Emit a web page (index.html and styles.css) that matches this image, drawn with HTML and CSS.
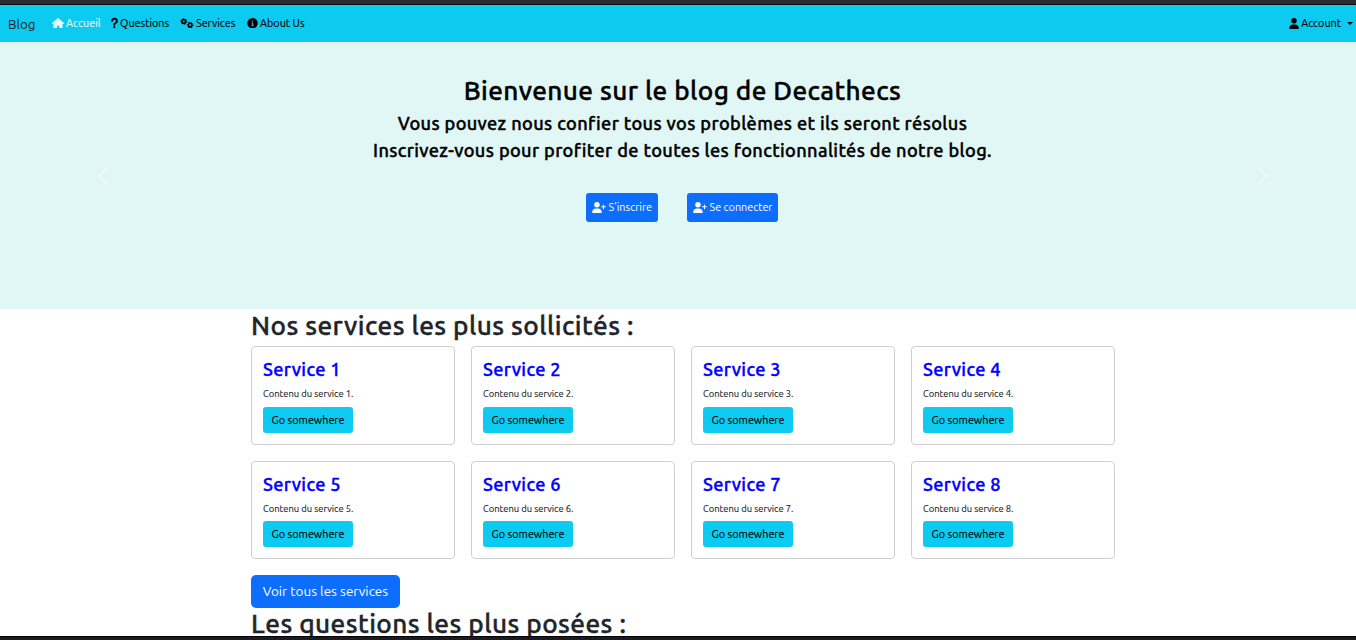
FILE: index.html
```html
<!DOCTYPE html>
<html lang="fr">
<head>
<meta charset="utf-8">
<title>Blog</title>
<link rel="stylesheet" href="styles.css">
</head>
<body>
<svg class="defs" aria-hidden="true">
  <symbol id="home" viewBox="0 0 576 512"><path d="M575.8 255.500c0 18-15 32.100-32 32.100h-32l.7 160.200c0 35-25 64.200-56 64.200H368c-18 0-32-14-32-32v-88c0-18-14-32-32-32h-32c-18 0-32 14-32 32v88c0 18-14 32-32 32h-88c-31 0-56-29-56-64V287.600H32c-18 0-32-14-32-32.100 0-9 3-17 10-24L266.400 8c7-7 15-8 22-8s15 2 21 7l255.400 224.500c8 7 12 15 11 24z"/></symbol>
  <symbol id="question" viewBox="0 0 320 512"><path stroke="currentColor" stroke-width="24" d="M80 160c0-35 29-64 64-64h32c35 0 64 29 64 64v4c0 22-11 42-30 54l-44 28c-30 19-48 52-48 88v2c0 18 14 32 32 32s32-14 32-32v-1c0-14 7-27 19-34l44-29c37-23 59-64 59-108v-4c0-71-57-128-128-128h-32C73 32 16 89 16 160c0 18 14 32 32 32s32-14 32-32zm70 320a40 40 0 1 0 0-80 40 40 0 1 0 0 80z"/></symbol>
  <symbol id="gears" viewBox="0 0 640 512"><g fill="none" stroke="currentColor"><circle cx="165" cy="165" r="88" stroke-width="80"/><circle cx="165" cy="165" r="143" stroke-width="48" stroke-dasharray="75 74.750"/><circle cx="475" cy="345" r="88" stroke-width="80"/><circle cx="475" cy="345" r="143" stroke-width="48" stroke-dasharray="75 74.750" stroke-dashoffset="35"/></g></symbol>
  <symbol id="info" viewBox="0 0 512 512"><path fill-rule="evenodd" d="M256 512a256 256 0 1 0 0-512 256 256 0 1 0 0 512zm-40-176h24v-64h-24a24 24 0 0 1 0-48h48c13 0 24 11 24 24v88h8a24 24 0 0 1 0 48h-80a24 24 0 0 1 0-48zm40-208a32 32 0 1 1 0 64 32 32 0 1 1 0-64z"/></symbol>
  <symbol id="user" viewBox="0 0 448 512"><path d="M224 256a128 128 0 1 0 0-256 128 128 0 1 0 0 256zm-46 48C80 304 0 384 0 482c0 16 13 30 30 30h388c17 0 30-14 30-30 0-98-80-178-178-178z"/></symbol>
  <symbol id="user-plus" viewBox="0 0 640 512"><path d="M224 256a128 128 0 1 0 0-256 128 128 0 1 0 0 256zm-46 48C80 304 0 384 0 482c0 16 13 30 30 30h388c17 0 30-14 30-30 0-98-80-178-178-178zM504 312v-64h-64a24 24 0 0 1 0-48h64v-64a24 24 0 0 1 48 0v64h64a24 24 0 0 1 0 48h-64v64a24 24 0 0 1-48 0z"/></symbol>
</svg>
<div class="window-top"></div>
<nav class="navbar">
  <a class="brand">Blog</a>
  <a class="link home active"><svg class="icon"><use href="#home"/></svg><span>Accueil</span></a>
  <a class="link questions"><svg class="icon"><use href="#question"/></svg><span>Questions</span></a>
  <a class="link services-link"><svg class="icon"><use href="#gears"/></svg><span>Services</span></a>
  <a class="link about"><svg class="icon"><use href="#info"/></svg><span>About Us</span></a>
  <a class="link account"><svg class="icon"><use href="#user"/></svg><span>Account</span><i class="caret"></i></a>
</nav>
<header class="hero">
  <svg class="arrow" viewBox="0 0 16 16"><path d="M11.350 1.650 5 8l6.350 6.350"/></svg>
  <div class="hero-content">
    <h1>Bienvenue sur le blog de Decathecs</h1>
    <h2 class="lead">Vous pouvez nous confier tous vos problèmes et ils seront résolus</h2>
    <h2 class="sublead">Inscrivez-vous pour profiter de toutes les fonctionnalités de notre blog.</h2>
    <div class="actions">
      <a class="button signup"><svg class="icon"><use href="#user-plus"/></svg><span>S'inscrire</span></a>
      <a class="button login"><svg class="icon"><use href="#user-plus"/></svg><span>Se connecter</span></a>
    </div>
  </div>
  <svg class="arrow" viewBox="0 0 16 16"><path d="M4.650 1.650 11 8l-6.350 6.350"/></svg>
</header>
<main class="container">
  <h2 class="section-title"><span>Nos services les plus sollicités :</span></h2>
  <div class="cards">
    <article class="card"><h3>Service 1</h3><p>Contenu du service 1.</p><a class="go">Go somewhere</a></article>
    <article class="card"><h3>Service 2</h3><p>Contenu du service 2.</p><a class="go">Go somewhere</a></article>
    <article class="card"><h3>Service 3</h3><p>Contenu du service 3.</p><a class="go">Go somewhere</a></article>
    <article class="card"><h3>Service 4</h3><p>Contenu du service 4.</p><a class="go">Go somewhere</a></article>
    <article class="card"><h3>Service 5</h3><p>Contenu du service 5.</p><a class="go">Go somewhere</a></article>
    <article class="card"><h3>Service 6</h3><p>Contenu du service 6.</p><a class="go">Go somewhere</a></article>
    <article class="card"><h3>Service 7</h3><p>Contenu du service 7.</p><a class="go">Go somewhere</a></article>
    <article class="card"><h3>Service 8</h3><p>Contenu du service 8.</p><a class="go">Go somewhere</a></article>
  </div>
  <a class="all">Voir tous les services</a>
  <h2 class="section-title posed"><span>Les questions les plus posées :</span></h2>
</main>
<footer class="window-bottom"></footer>
</body>
</html>
```
FILE: styles.css
```css
* { box-sizing: border-box; }
body {
  margin: 0;
  height: 640px;
  overflow: hidden;
  display: flex;
  flex-direction: column;
  background: #fff;
  color: #212529;
  font-family: Ubuntu, "Open Sans", "Noto Sans", sans-serif;
  font-size: 10.800px;
}
h1, h2, h3, p { margin: 0; font-weight: 500; white-space: nowrap; }
h1, h2, h3 { -webkit-text-stroke: .4px currentColor; }
.defs { display: none; }
.icon { fill: currentColor; color: inherit; flex: none; }
.window-top { flex: none; height: 5px; background: #2b2a33; border-bottom: 1px solid #0c0c0d; }

.navbar { flex: none; height: 37px; display: flex; background: #0dcaf0; color: #000; padding: 0 3px 0 8px; line-height: 37px; white-space: nowrap; }
.brand { width: 44px; font-size: 13.400px; line-height: 39px; color: #212529; }
.link { display: flex; align-items: center; gap: 2px; height: 36px; }
.link span, .go, .card p { -webkit-text-stroke: .12px currentColor; }
.link .icon { height: 10.500px; }
.home { width: 59px; }
.home .icon { width: 12px; }
.active { color: #e0f9fe; }
.questions { width: 69px; }
.questions .icon { width: 7px; height: 12px; }
.services-link { width: 67px; }
.services-link .icon { width: 14px; }
.about .icon { width: 11px; }
.account { margin-left: auto; }
.account .icon { width: 10px; height: 11px; }
.caret { margin-left: 4px; border: 3px solid transparent; border-top-color: currentColor; border-bottom: 0; }

.hero { flex: none; height: 267px; background: #e0f7f5; color: #000; display: flex; justify-content: space-between; padding: 0 83px 0 93px; }
.arrow { width: 20px; height: 20px; margin-top: 124px; fill: none; stroke: #fff; stroke-opacity: .5; stroke-width: 1.300; stroke-linecap: round; }
.hero-content { display: flex; flex-direction: column; align-items: center; padding-top: 33px; margin-left: -1px; }
.hero h1 { font-size: 26.200px; line-height: 32px; letter-spacing: .4px; }
.lead, .sublead { font-size: 18.200px; line-height: 27px; letter-spacing: .36px; }
.lead { margin-top: 3px; }
.actions { display: flex; gap: 29px; margin-top: 29px; }
.button { display: flex; align-items: center; gap: 2px; height: 29px; padding: 0 6px 1px; border-radius: 3px; background: #0d6efd; color: #fff; white-space: nowrap; }
.button .icon { width: 14px; height: 11px; }
.signup { width: 72px; }
.login { width: 91px; }

.container { flex: 1; min-height: 0; width: 864px; margin-left: 251px; }
.section-title { font-size: 26.200px; line-height: 32px; padding-top: 1px; height: 37px; letter-spacing: .43px; }
.cards { display: grid; grid-template-columns: repeat(4, 204px); grid-template-rows: 99px 98px; gap: 16px; }
.card { border: 1px solid #d0d0d1; border-radius: 4px; padding: 10px 11px 0; }
.card h3 { font-size: 18.200px; line-height: 24px; letter-spacing: .35px; color: #00f; }
.card p { font-size: 9.400px; line-height: 14px; margin: 6px 0; font-weight: 400; }
.go { display: flex; align-items: center; justify-content: center; width: 90px; height: 26px; border-radius: 3px; background: #0dcaf0; color: #000; line-height: 14px; white-space: nowrap; }
.card:nth-child(n+5) .go { margin-top: -1px; }
.all { display: flex; align-items: center; justify-content: center; width: 149px; height: 33px; padding-bottom: 1px; margin-top: 16px; border-radius: 5px; background: #0d6efd; color: #fff; font-size: 13.500px; white-space: nowrap; }
.posed { padding-top: 0; height: 28px; }
.window-bottom { flex: none; height: 4px; background: #1c1b22; border-top: 1px solid #000; z-index: 1; }
```
